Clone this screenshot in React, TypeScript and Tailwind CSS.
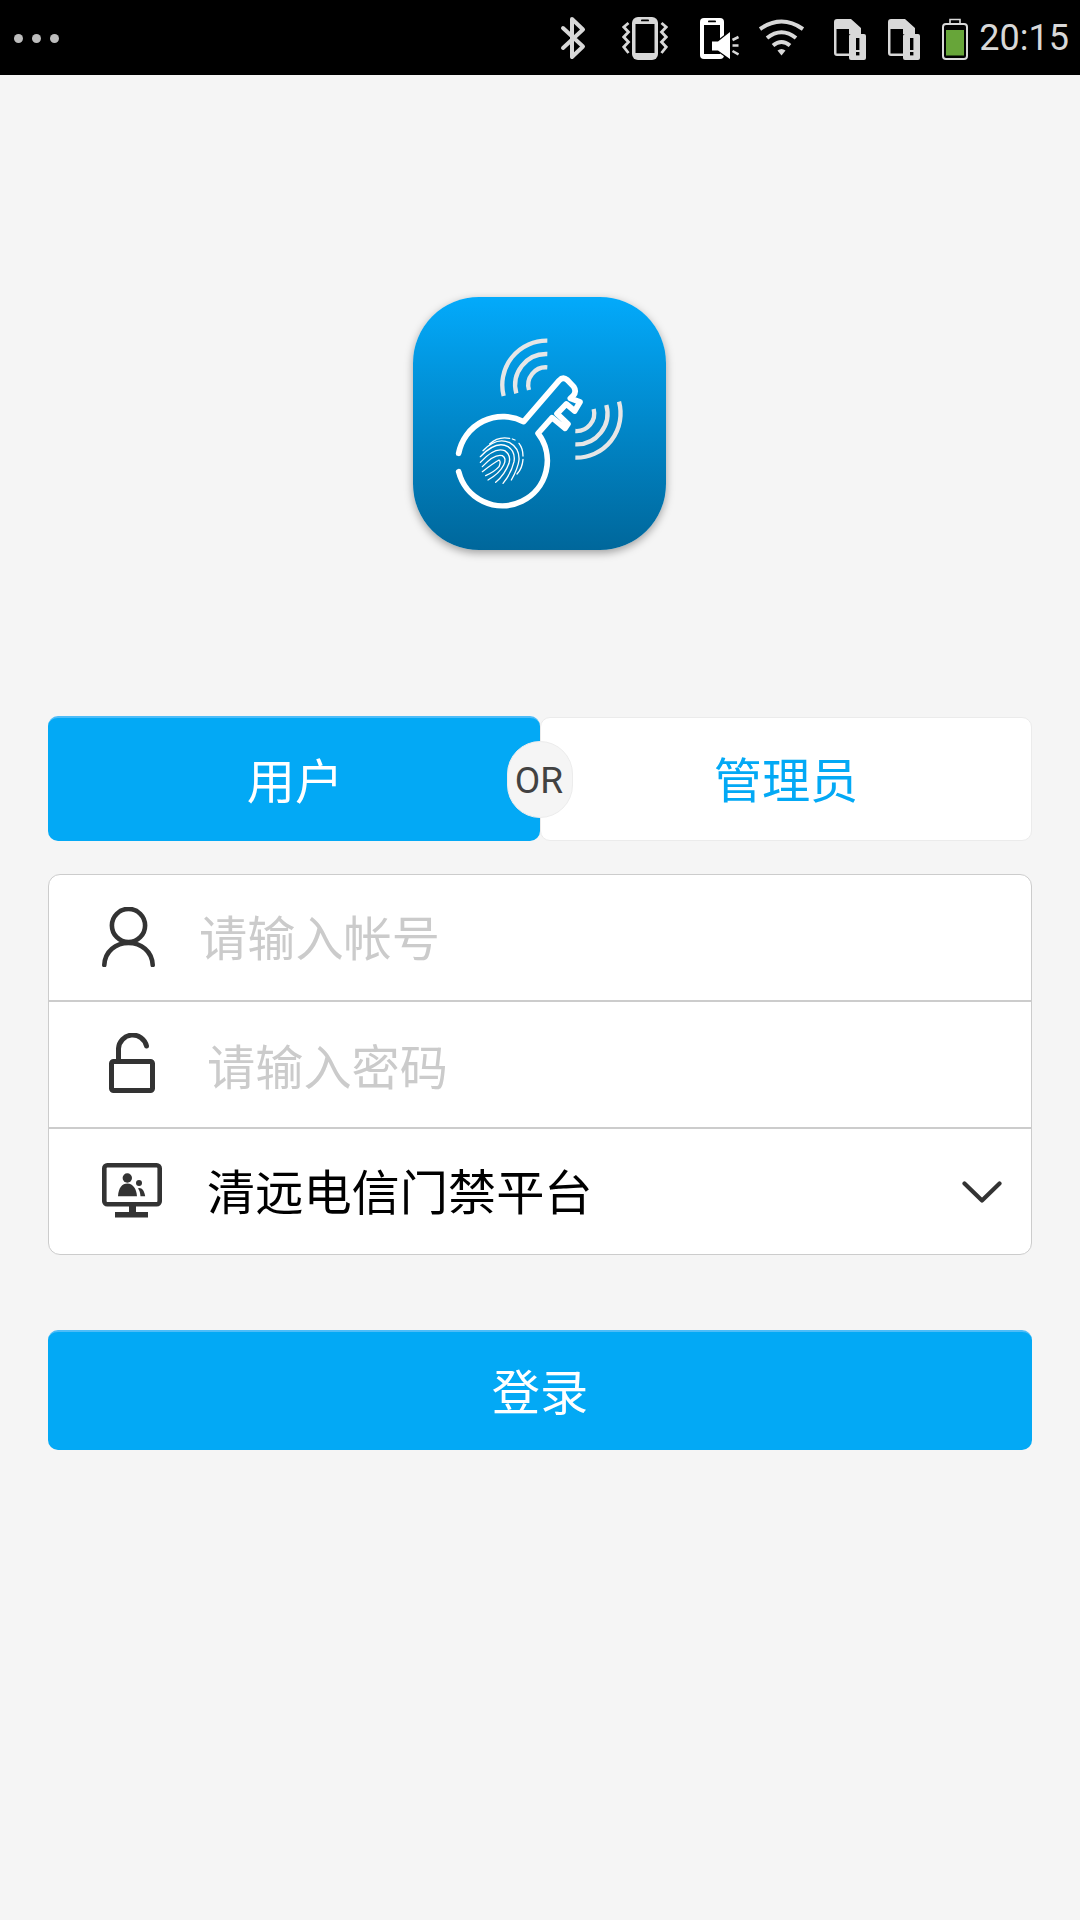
import React from 'react';

const STATUS_GRAY = '#d8d8d8';

const Bluetooth = () => (
  <svg width="26" height="44" viewBox="0 0 26 44" fill="none" stroke={STATUS_GRAY} strokeWidth="4">
    <path d="M3 12 L23 30.5 L12 41 V3 L23 13.5 L3 32" strokeLinejoin="round" strokeLinecap="round" />
  </svg>
);

const Vibrate = () => (
  <svg width="46" height="44" viewBox="0 0 46 44" className="ml-[36px]">
    <rect x="10" y="1" width="26" height="43" rx="6" fill={STATUS_GRAY} />
    <rect x="13.5" y="8" width="19" height="29" fill="#000" />
    <rect x="19" y="3.5" width="8" height="1.8" rx="0.9" fill="#000" />
    <path
      d="M6.5 7 L1.8 11 L6.5 16 L1.8 21 L6.5 26 L1.8 31 L6.5 37 M39.5 7 L44.2 11 L39.5 16 L44.2 21 L39.5 26 L44.2 31 L39.5 37"
      fill="none"
      stroke={STATUS_GRAY}
      strokeWidth="2.8"
    />
  </svg>
);

const PhoneSound = () => (
  <svg width="39" height="44" viewBox="0 0 39 44" className="ml-[32px]">
    <rect x="0" y="2" width="24" height="41" rx="4" fill="#fff" />
    <rect x="4" y="9" width="16" height="29" fill="#000" />
    <rect x="8" y="4.5" width="8" height="1.8" rx="0.9" fill="#000" />
    <path d="M12 25.5 H18 L30 16 V43 L18 34.5 H12 Z" fill="#fff" stroke="#000" strokeWidth="2.4" paintOrder="stroke" />
    <path d="M32.5 24 L38.5 21 M32.5 29.5 H38.5 M32.5 35 L38.5 38.5" stroke="#d8d8d8" strokeWidth="2.6" fill="none" />
  </svg>
);

const Wifi = () => (
  <svg width="45" height="44" viewBox="0 0 45 44" fill="none" stroke={STATUS_GRAY} className="ml-[20px]">
    <path d="M1 13 Q22.5 -2 44 13" strokeWidth="4" />
    <path d="M8 22 Q22.5 10.5 37 22" strokeWidth="4" />
    <path d="M14 29.5 Q22.5 22.5 31 29.5" strokeWidth="4" />
    <path d="M18.5 34.5 Q22.5 31.5 26.5 34.5 L22.5 39.5 Z" fill={STATUS_GRAY} stroke="none" />
  </svg>
);

const Sim = ({ className }: { className: string }) => (
  <svg width="32" height="44" viewBox="0 0 32 44" className={className}>
    <path d="M0 6 Q0 3 3 3 H17 L27 12 V18 H15 V40 H3 Q0 40 0 37 Z" fill={STATUS_GRAY} />
    <rect x="2.5" y="13" width="12.5" height="24.5" fill="#000" />
    <rect x="15" y="18" width="17" height="26" rx="2" fill={STATUS_GRAY} />
    <rect x="22" y="22" width="3.4" height="12" fill="#000" />
    <rect x="22" y="36" width="3.4" height="3.4" fill="#000" />
  </svg>
);

const Battery = () => (
  <svg width="26" height="44" viewBox="0 0 26 44" className="ml-[22px]">
    <path d="M8 8 V3.5 H18 V8" fill="none" stroke={STATUS_GRAY} strokeWidth="1.6" />
    <rect x="1" y="8" width="24" height="35" rx="3" fill="none" stroke={STATUS_GRAY} strokeWidth="2" />
    <rect x="4" y="14" width="18" height="25.5" fill="#67a539" />
  </svg>
);

const StatusBar = () => (
  <div className="flex h-[75px] items-center bg-black pl-[14px] pr-[11px] pt-[1px]">
    <div className="flex gap-[9px]">
      <span className="h-[9px] w-[9px] rounded-full bg-[#bdbdbd]" />
      <span className="h-[9px] w-[9px] rounded-full bg-[#bdbdbd]" />
      <span className="h-[9px] w-[9px] rounded-full bg-[#bdbdbd]" />
    </div>
    <div className="ml-auto flex items-center">
      <Bluetooth />
      <Vibrate />
      <PhoneSound />
      <Wifi />
      <Sim className="ml-[30px]" />
      <Sim className="ml-[22px]" />
      <Battery />
      <span className="ml-[11px] text-[36px] leading-none text-[#d8d8d8]">20:15</span>
    </div>
  </div>
);

// coordinates are taken 1:3 from the logo, hence the large viewBox
const Logo = () => (
  <div className="h-[253px] w-[253px] rounded-[66px] bg-linear-to-b from-[#03aafb] to-[#00679b] shadow-[0_3px_9px_rgba(0,0,0,0.35)]">
    <svg width="253" height="253" viewBox="40 36 759 759" fill="none">
      <path
        d="M177 505 A135 135 0 0 1 372 410 L478 287 Q490 274 503 285 L522 305 Q532 320 520 333 L512 340 L541 351 L525 378 L500 357 L472 386 L505 417 L496 430 L457 398 L415 445 A135 135 0 1 1 177 560"
        stroke="#fff"
        strokeWidth="17"
        strokeLinecap="round"
        strokeLinejoin="round"
      />
      <g stroke="#e6e6e6" strokeWidth="13">
        <path d="M443 167 A133 133 0 0 0 312 333" />
        <path d="M443 207 A93 93 0 0 0 350 325" />
        <path d="M443 247 A53 53 0 0 0 388 315" />
        <path d="M658 350 A133 133 0 0 1 527 518" />
        <path d="M620 360 A93 93 0 0 1 527 478" />
        <path d="M582 372 A53 53 0 0 1 527 438" />
      </g>
      <g transform="translate(210 435)" stroke="#fff" strokeWidth="4" strokeLinecap="round">
        <path d="M60 42 Q85 18 120 25 M128 27 L136 30 M148 40 Q160 55 160 78 M160 88 Q158 115 142 132" />
        <path d="M40 62 Q80 20 120 38 Q150 55 148 90 Q145 115 125 150" />
        <path d="M32 80 Q80 30 115 50 Q138 65 133 95 Q125 130 100 160" />
        <path d="M32 97 Q75 50 105 62 Q125 75 118 100 Q105 135 78 157" />
        <path d="M38 110 Q75 70 98 77 Q112 85 102 105 Q90 130 55 150" />
        <path d="M38 125 Q70 100 88 90 Q95 95 88 110 Q75 125 48 137" />
      </g>
    </svg>
  </div>
);

const UserIcon = () => (
  <svg width="53" height="60" viewBox="0 0 53 60" fill="none" stroke="#333" strokeWidth="4.6" strokeLinecap="round" className="mb-[2px]">
    <circle cx="26.5" cy="18.5" r="16.6" />
    <path d="M2.3 58 C3 44 14 36 26.5 36 C39 36 50 44 50.7 58" />
  </svg>
);

const LockIcon = () => (
  <svg width="46" height="60" viewBox="0 0 46 60" fill="none" stroke="#333" strokeWidth="5" strokeLinecap="round" className="mb-[4px]">
    <rect x="2.5" y="28.5" width="41" height="29" rx="2" />
    <path d="M9.5 27 V15.5 A14.2 14.2 0 0 1 37.5 13" />
  </svg>
);

const MonitorIcon = () => (
  <svg width="60" height="55" viewBox="0 0 60 55" fill="#333" className="mb-[2px]">
    <rect x="2.3" y="2.3" width="55.4" height="38.9" rx="3" fill="none" stroke="#333" strokeWidth="4.6" />
    <rect x="27" y="42" width="7" height="8" />
    <rect x="13" y="49" width="33" height="5.5" />
    <circle cx="25.3" cy="15" r="4.7" />
    <path d="M16 33.3 C16.5 25 20 20.5 25.5 20.5 C31 20.5 34.5 26 35 33.3 Z" />
    <circle cx="37" cy="20" r="3" />
    <path d="M37 25 C40.5 25 42.5 28.5 43.2 33.3 H38.5 C38.3 30 37.5 27 36 25.5 Z" />
  </svg>
);

const Chevron = () => (
  <svg width="40" height="22" viewBox="0 0 40 22" fill="none" stroke="#333" strokeWidth="4.2" strokeLinecap="round" strokeLinejoin="round">
    <path d="M2.5 2.5 L20 19.5 L37.5 2.5" />
  </svg>
);

export default function App() {
  return (
    <div className="flex min-h-screen flex-col bg-[#f5f5f5] font-['Roboto','Noto_Sans_CJK_SC',sans-serif]">
      <StatusBar />

      <div className="mt-[222px] flex justify-center pr-[2px]">
        <Logo />
      </div>

      <div className="mx-12 mt-[166px] flex flex-col">
        {/* account type switch */}
        <div className="relative grid h-[125px] grid-cols-2 text-[48.2px]">
          <div className="flex items-center justify-center rounded-[10px] border-t-2 border-[#4dbcf8] bg-[#03a9f5] pl-[2px] pt-[8px] text-white">
            用户
          </div>
          <div className="mt-px flex items-center justify-center rounded-[10px] border border-[#ebebeb] bg-white pt-[7px] text-[#03a9f5]">
            管理员
          </div>
          <div className="absolute left-[459px] top-[25px] flex h-[77px] w-[66px] items-center justify-center rounded-full border border-[#ececec] bg-[#f5f5f5] pr-[2px] pt-[3px] text-[37px] text-[#424242]">
            OR
          </div>
        </div>

        {/* login fields */}
        <div className="mt-[33px] flex flex-col rounded-xl border border-[#cccccc] bg-white text-[48.2px]">
          <div className="flex h-[127px] items-center border-b-2 border-[#cccccc] pl-[53px]">
            <UserIcon />
            <span className="ml-[44px] pt-[6px] text-[#cbcbcb]">请输入帐号</span>
          </div>
          <div className="flex h-[127px] items-center border-b-2 border-[#cccccc] pl-[60px]">
            <LockIcon />
            <span className="ml-[52px] pt-[10px] text-[#cbcbcb]">请输入密码</span>
          </div>
          <div className="flex h-[125px] items-center pl-[53px] pr-[29px]">
            <MonitorIcon />
            <span className="ml-[45px] pt-[6px] text-black">清远电信门禁平台</span>
            <span className="ml-auto">
              <Chevron />
            </span>
          </div>
        </div>

        <button className="mt-[75px] flex h-[120px] items-center justify-center rounded-[10px] border-t-2 border-[#4dbcf8] bg-[#03a9f5] pt-[7px] text-[48.2px] text-white">
          登录
        </button>
      </div>
    </div>
  );
}
